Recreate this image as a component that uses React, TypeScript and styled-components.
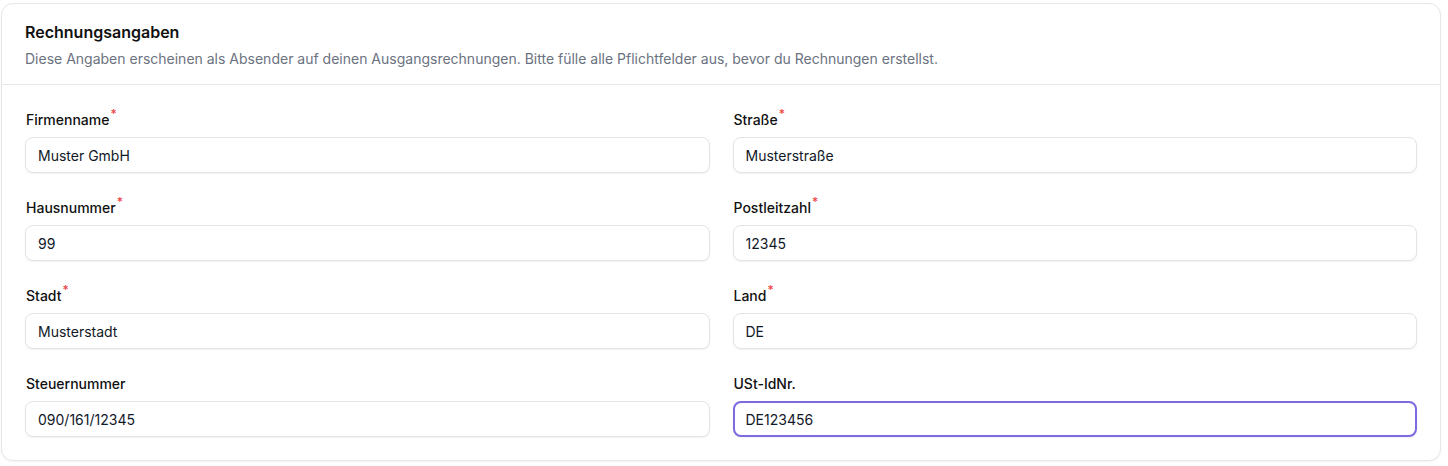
import React from "react";
import styled, { createGlobalStyle } from "styled-components";

const GlobalStyle = createGlobalStyle`
  * { box-sizing: border-box; }
  html, body { margin: 0; padding: 0; background: #ffffff; }
  body { font-family: Inter, "Noto Sans", sans-serif; color: #111827; -webkit-font-smoothing: antialiased; }
`;

const Page = styled.div`
  padding: 3px 7px 4px 1px;
`;

const Card = styled.section`
  width: 1440px;
  background: #ffffff;
  border: 1px solid #e5e7eb;
  border-radius: 12px;
  box-shadow: 0 1px 2px rgba(0, 0, 0, 0.05);
`;

const Header = styled.header`
  padding: 18px 23px 15px;
  border-bottom: 1px solid #e5e7eb;
`;

const Title = styled.h2`
  margin: 0;
  font-size: 16px;
  line-height: 20px;
  font-weight: 600;
  color: #111111;
`;

const Description = styled.p`
  margin: 7px 0 0;
  font-size: 14px;
  line-height: 20px;
  color: #6b7280;
`;

const Body = styled.div`
  padding: 24px 23px 23px;
  display: grid;
  grid-template-columns: 1fr 1fr;
  column-gap: 23px;
  row-gap: 24px;
`;

const Field = styled.div`
  display: flex;
  flex-direction: column;
  gap: 8px;
`;

const Label = styled.label`
  font-size: 14px;
  line-height: 20px;
  font-weight: 500;
  color: #111111;
  padding-left: 1px;
  position: relative;
  top: 1px;
`;

const Required = styled.sup`
  color: #ef4444;
  font-size: 12px;
  line-height: 0;
  margin-left: 1px;
  position: relative;
  top: -1px;
`;

const Input = styled.input<{ $active?: boolean }>`
  height: 36px;
  width: 100%;
  padding: 0 12px;
  font-family: Inter, "Noto Sans", sans-serif;
  font-size: 14px;
  color: #111827;
  background: #ffffff;
  border: ${(p) => (p.$active ? "2px solid #7c6be0" : "1px solid #e2e4e9")};
  padding-left: ${(p) => (p.$active ? "11px" : "12px")};
  border-radius: 8px;
  box-shadow: 0 1px 2px rgba(0, 0, 0, 0.06);
  outline: none;
  caret-color: #111;
`;

const fields = [
  { label: "Firmenname", value: "Muster GmbH", required: true },
  { label: "Straße", value: "Musterstraße", required: true },
  { label: "Hausnummer", value: "99", required: true },
  { label: "Postleitzahl", value: "12345", required: true },
  { label: "Stadt", value: "Musterstadt", required: true },
  { label: "Land", value: "DE", required: true },
  { label: "Steuernummer", value: "090/161/12345", required: false },
  { label: "USt-IdNr.", value: "DE123456", required: false, active: true },
];

export default function App() {
  return (
    <>
      <GlobalStyle />
      <Page>
        <Card>
          <Header>
            <Title>Rechnungsangaben</Title>
            <Description>
              Diese Angaben erscheinen als Absender auf deinen Ausgangsrechnungen. Bitte fülle alle Pflichtfelder aus,
              bevor du Rechnungen erstellst.
            </Description>
          </Header>
          <Body>
            {fields.map((f) => (
              <Field key={f.label}>
                <Label>
                  {f.label}
                  {f.required && <Required>*</Required>}
                </Label>
                <Input
                  $active={f.active}
                  defaultValue={f.value}
                  autoFocus={f.active}
                  onFocus={(e) => {
                    const el = e.currentTarget;
                    el.setSelectionRange(el.value.length, el.value.length);
                  }}
                />
              </Field>
            ))}
          </Body>
        </Card>
      </Page>
    </>
  );
}
